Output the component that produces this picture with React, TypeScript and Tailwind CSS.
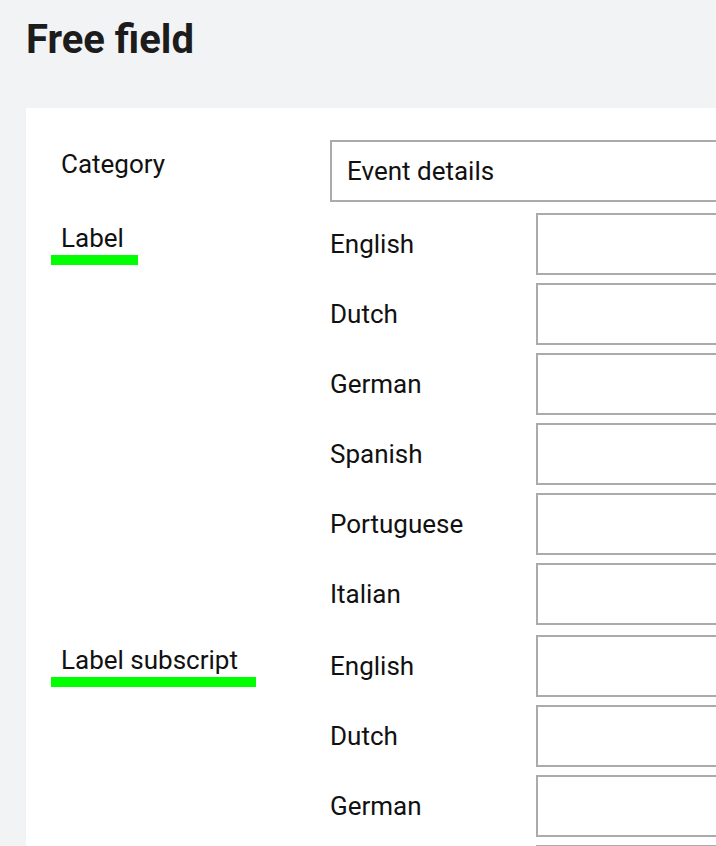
const languages = ["English", "Dutch", "German", "Spanish", "Portuguese", "Italian"];

function LangRows({ langs }: { langs: string[] }) {
  return (
    <div className="flex flex-col gap-[8px]">
      {langs.map((lang) => (
        <div key={lang} className="flex items-center h-[62px]">
          <div className="w-[206px] shrink-0">{lang}</div>
          <input
            type="text"
            className="h-[62px] w-[320px] shrink-0 border-2 border-[#ababab] bg-white outline-none"
          />
        </div>
      ))}
    </div>
  );
}

function Marked({ text, width }: { text: string; width: number }) {
  return (
    <div className="pt-[10px]">
      <div>{text}</div>
      {/* highlighter mark */}
      <div
        className="-ml-[10px] mt-[2px] h-[10px] bg-[#00ff00]"
        style={{ width }}
      />
    </div>
  );
}

export default function App() {
  return (
    <div
      className="w-[716px] h-[846px] overflow-hidden bg-[#f2f3f5] text-[#111]"
      style={{ fontFamily: "Roboto, 'Noto Sans', sans-serif" }}
    >
      <h1 className="pl-[26px] pt-[16px] text-[40px] leading-[48px] font-bold text-[#1c1c1c]">
        Free field
      </h1>
      <div className="ml-[26px] mt-[44px] w-[800px] bg-white pl-[35px] pt-[32px] text-[26px] leading-[30px]">
        <div className="flex">
          <div className="w-[269px] shrink-0 pt-[9px]">Category</div>
          <div className="flex h-[62px] w-[420px] shrink-0 items-center border-2 border-[#ababab] pl-[15px]">
            Event details
          </div>
        </div>

        <div className="mt-[11px] flex">
          <div className="w-[269px] shrink-0">
            <Marked text="Label" width={87} />
          </div>
          <LangRows langs={languages} />
        </div>

        <div className="mt-[10px] flex">
          <div className="w-[269px] shrink-0">
            <Marked text="Label subscript" width={205} />
          </div>
          <LangRows langs={languages.slice(0, 4)} />
        </div>
      </div>
    </div>
  );
}
